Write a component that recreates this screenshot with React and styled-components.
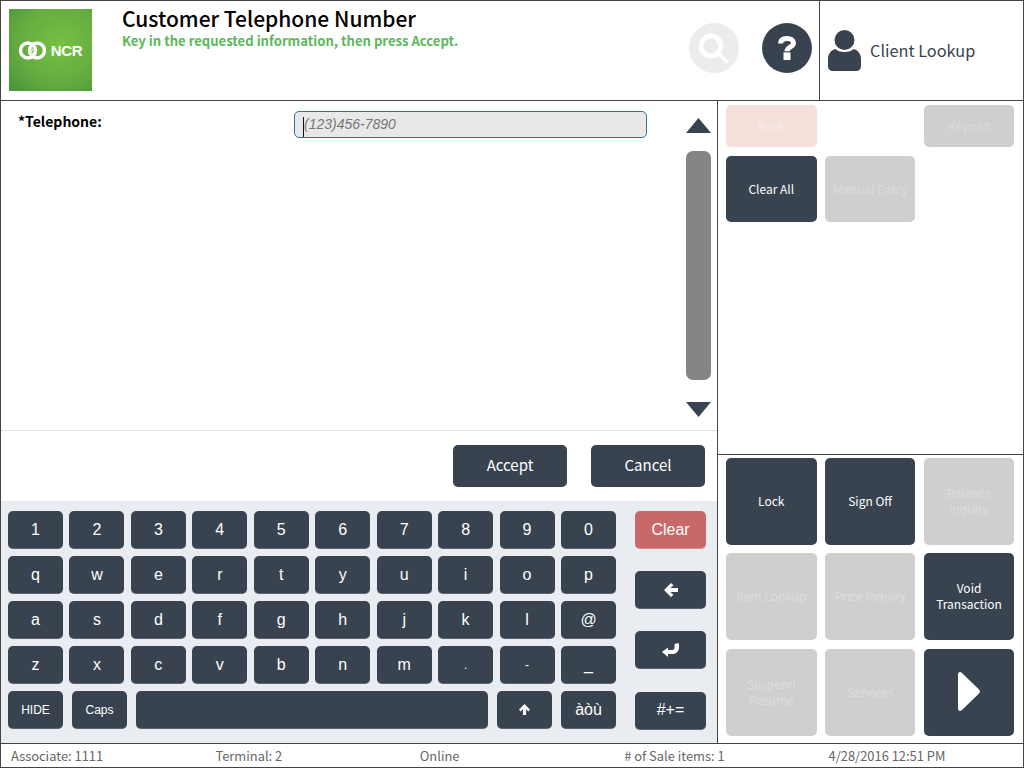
import React from 'react';
import styled, { createGlobalStyle } from 'styled-components';

const DARK = '#38434f';
const SANS = '"Noto Sans CJK JP", "Lato", sans-serif';
const ARIAL = '"Liberation Sans", Arial, sans-serif';

const KEY_ROWS = [
  ['1', '2', '3', '4', '5', '6', '7', '8', '9', '0'],
  ['q', 'w', 'e', 'r', 't', 'y', 'u', 'i', 'o', 'p'],
  ['a', 's', 'd', 'f', 'g', 'h', 'j', 'k', 'l', '@'],
  ['z', 'x', 'c', 'v', 'b', 'n', 'm', '.', '-', '_'],
];

const STATUS = ['Associate: 1111', 'Terminal: 2', 'Online', '# of Sale items: 1', '4/28/2016 12:51 PM'];

const GlobalStyle = createGlobalStyle`
  html, body {
    margin: 0;
    padding: 0;
    background: #fff;
  }
  * {
    box-sizing: border-box;
  }
`;

const ArrowGlyph = ({ size, turn }) => (
  <svg width={size} height={size} viewBox="0 0 14 14" style={{ transform: `rotate(${turn}deg)` }}>
    <path d="M0 7L7 0l2.500 2.300L6.300 5H14v4H6.300l3.200 2.700L7 14z" fill="#fff" />
  </svg>
);

const App = () => (
  <>
    <GlobalStyle />
    <Screen>
      <Header>
        <Logo>
          <svg width="27" height="19" viewBox="0 0 27 19">
            <g fill="none" stroke="#fff" strokeWidth="3.400">
              <circle cx="9" cy="9.500" r="7.500" />
              <circle cx="18" cy="9.500" r="7.500" />
            </g>
            <path d="M10 13l6-7M12 14.500l5-6M10 9.500l4-5" stroke="#e4f0dc" strokeWidth="1.200" />
          </svg>
          <LogoName>NCR</LogoName>
        </Logo>
        <Heading>
          <Title>Customer Telephone Number</Title>
          <Hint>Key in the requested information, then press Accept.</Hint>
        </Heading>
        <RoundIcon $disabled>
          <svg width="32" height="32" viewBox="0 0 32 32">
            <circle cx="13" cy="14" r="10" fill="none" stroke="#fff" strokeWidth="5" />
            <path d="M21 22l7.500 7.500" stroke="#fff" strokeWidth="3.600" strokeLinecap="round" />
          </svg>
        </RoundIcon>
        <RoundIcon>
          <svg width="18" height="24" viewBox="0 0 18 24">
            <path d="M2.500 7.500C2.500 4.200 5 2.500 9 2.500s6.500 1.800 6.500 4.700c0 3.800-6.500 3.600-6.500 8" fill="none" stroke="#fff" strokeWidth="5" />
            <rect x="5.500" y="16.400" width="7" height="7.600" fill="#fff" />
          </svg>
        </RoundIcon>
        <ClientLookup>
          <svg width="33" height="41" viewBox="0 0 33 41">
            <circle cx="16.500" cy="10" r="10" fill={DARK} />
            <path d="M7.500 19c3 4 15 4 18 0 4.500 1 7.500 5 7.500 10v7c0 3-2 5-5 5H5c-3 0-5-2-5-5v-7c0-5 3-9 7.500-10z" fill={DARK} />
          </svg>
          <ClientName>Client Lookup</ClientName>
        </ClientLookup>
      </Header>

      <Body>
        <LeftPanel>
          <FormArea>
            <FieldRow>
              <FieldLabel>*Telephone:</FieldLabel>
              <FieldInput>
                <Caret />
                (123)456-7890
              </FieldInput>
            </FieldRow>
            <ScrollColumn>
              <ScrollArrow />
              <ScrollThumb />
              <ScrollArrow $down />
            </ScrollColumn>
          </FormArea>

          <Actions>
            <ActionButton>Accept</ActionButton>
            <ActionButton>Cancel</ActionButton>
          </Actions>

          <Keyboard>
            <Keys>
              {KEY_ROWS.map((row) => (
                <KeyRow key={row[0]}>
                  {row.map((k) => (
                    <Key key={k} $small={k === '.' || k === '-'}>
                      {k}
                    </Key>
                  ))}
                </KeyRow>
              ))}
              <BottomRow>
                <Key $small>HIDE</Key>
                <Key $small>Caps</Key>
                <Key />
                <Key $small>
                  <ArrowGlyph size={11} turn={90} />
                </Key>
                <Key>àòù</Key>
              </BottomRow>
            </Keys>
            <SideKeys>
              <SideKey $red>Clear</SideKey>
              <SideKey>
                <ArrowGlyph size={14} turn={0} />
              </SideKey>
              <SideKey>
                <svg width="17" height="14" viewBox="0 0 17 14">
                  <path d="M0 9l6-4.500V7h4c1.500 0 2.500-.8 2.500-2.500V1L16.500 0c.7 2 .7 4 .3 6-.6 2.800-3 5-6 5H6v3z" fill="#fff" />
                </svg>
              </SideKey>
              <SideKey>#+=</SideKey>
            </SideKeys>
          </Keyboard>
        </LeftPanel>

        <RightPanel>
          <TopActions>
            <ShortButton $tone="pink">Back</ShortButton>
            <span />
            <ShortButton $tone="off">Keypad</ShortButton>
            <TallButton>Clear All</TallButton>
            <TallButton $tone="off">Manual Entry</TallButton>
          </TopActions>
          <BottomActions>
            <GridButton>Lock</GridButton>
            <GridButton>Sign Off</GridButton>
            <GridButton $tone="off">Balance<br />Inquiry</GridButton>
            <GridButton $tone="off">Item Lookup</GridButton>
            <GridButton $tone="off">Price Inquiry</GridButton>
            <GridButton>Void<br />Transaction</GridButton>
            <GridButton $tone="off">Suspend<br />Resume</GridButton>
            <GridButton $tone="off">Services</GridButton>
            <GridButton>
              <svg width="22" height="39" viewBox="0 0 22 39">
                <path d="M2 0C.8 0 0 1 0 2.500v34C0 38 .8 39 2 39c.6 0 1.200-.3 1.700-.8L21 21.500c1.200-1.200 1.200-2.800 0-4L3.700 .8C3.200 .3 2.600 0 2 0z" fill="#fff" />
              </svg>
            </GridButton>
          </BottomActions>
        </RightPanel>
      </Body>

      <Footer>
        {STATUS.map((s) => (
          <FooterItem key={s}>{s}</FooterItem>
        ))}
      </Footer>
    </Screen>
  </>
);

export default App;

const Screen = styled.div`
  width: 1024px;
  height: 768px;
  display: flex;
  flex-direction: column;
  border: 1px solid #444;
  font-family: ${SANS};
  background: #fff;
  overflow: hidden;
`;

const Header = styled.div`
  height: 100px;
  flex: none;
  display: flex;
  align-items: flex-start;
  border-bottom: 1px solid #444;
`;

const Logo = styled.div`
  width: 83px;
  height: 82px;
  margin: 8px 0 0 8px;
  flex: none;
  display: flex;
  align-items: center;
  justify-content: center;
  gap: 5px;
  background: radial-gradient(ellipse at 62% 42%, #76c043 0%, #66ad40 55%, #48933b 100%);
`;

const LogoName = styled.span`
  font-family: ${ARIAL};
  font-size: 15px;
  font-weight: 700;
  letter-spacing: -0.3px;
  color: #fff;
`;

const Heading = styled.div`
  flex: 1;
  padding: 4px 0 0 30px;
`;

const Title = styled.div`
  font-size: 21px;
  line-height: 27px;
  font-weight: 500;
  color: #000;
`;

const Hint = styled.div`
  font-size: 13.100px;
  line-height: 18px;
  font-weight: 700;
  color: #5cb85c;
`;

const RoundIcon = styled.div`
  width: 50px;
  height: 50px;
  margin-top: 22px;
  margin-right: 23px;
  flex: none;
  border-radius: 50%;
  display: flex;
  align-items: center;
  justify-content: center;
  background: ${(p) => (p.$disabled ? '#ececec' : DARK)};
`;

const ClientLookup = styled.div`
  width: 204px;
  height: 99px;
  margin-left: -16px;
  flex: none;
  display: flex;
  align-items: center;
  gap: 9px;
  padding: 0 0 0 8px;
  border-left: 1px solid #444;
  font-size: 16.300px;
  color: ${DARK};
`;

const ClientName = styled.span`
  margin-bottom: 2px;
`;

const Body = styled.div`
  flex: 1;
  min-height: 0;
  display: flex;
`;

const LeftPanel = styled.div`
  width: 717px;
  flex: none;
  display: flex;
  flex-direction: column;
  border-right: 1px solid #444;
`;

const FormArea = styled.div`
  height: 330px;
  flex: none;
  display: flex;
  justify-content: space-between;
  border-bottom: 1px dotted #c8c8c8;
`;

const FieldRow = styled.div`
  width: 646px;
  display: flex;
  justify-content: space-between;
  align-items: flex-start;
  padding: 10px 0 0 17px;
`;

const FieldLabel = styled.div`
  font-size: 14px;
  line-height: 20px;
  font-weight: 700;
  color: #000;
`;

const FieldInput = styled.div`
  width: 353px;
  height: 27px;
  display: flex;
  align-items: center;
  padding: 0 0 1px 8px;
  border: 1px solid #2a72b8;
  border-radius: 5px;
  background: #e8e8e8;
  font-family: ${ARIAL};
  font-size: 14px;
  font-style: italic;
  color: #777;
`;

const Caret = styled.span`
  width: 1px;
  height: 20px;
  align-self: flex-end;
  margin-bottom: -1px;
  background: #111;
`;

const ScrollColumn = styled.div`
  width: 25px;
  margin-right: 6px;
  display: flex;
  flex-direction: column;
  padding-top: 17px;
`;

const ScrollArrow = styled.div`
  width: 25px;
  height: 15px;
  flex: none;
  background: ${DARK};
  clip-path: ${(p) => (p.$down ? 'polygon(0 0, 100% 0, 50% 100%)' : 'polygon(50% 0, 100% 100%, 0 100%)')};
`;

const ScrollThumb = styled.div`
  width: 25px;
  height: 229px;
  margin: 18px 0 22px;
  flex: none;
  border-radius: 7px;
  background: #858585;
`;

const Actions = styled.div`
  height: 70px;
  flex: none;
  display: flex;
  justify-content: flex-end;
  align-items: flex-start;
  gap: 24px;
  padding: 14px 12px 0 0;
`;

const ActionButton = styled.div`
  width: 114px;
  height: 42px;
  display: flex;
  align-items: center;
  justify-content: center;
  padding-bottom: 4px;
  border-radius: 5px;
  background: ${DARK};
  color: #fff;
  font-size: 15px;
`;

const Keyboard = styled.div`
  flex: 1;
  display: flex;
  padding: 10px 11px 0 7px;
  background: #e9ecf1;
`;

const Keys = styled.div`
  width: 608px;
  flex: none;
  display: flex;
  flex-direction: column;
  gap: 7px;
`;

const KeyRow = styled.div`
  display: grid;
  grid-template-columns: repeat(10, 1fr);
  column-gap: 6.5px;
`;

const BottomRow = styled.div`
  display: grid;
  grid-template-columns: 55px 55px 352px 55px 55px;
  column-gap: 9px;
`;

const Key = styled.div`
  height: 38px;
  display: flex;
  align-items: center;
  justify-content: center;
  border-radius: 5px;
  border-bottom: 1px solid #59636e;
  background: ${DARK};
  color: #fff;
  font-family: ${ARIAL};
  font-size: ${(p) => (p.$small ? '12px' : '16px')};
`;

const SideKeys = styled.div`
  flex: 1;
  display: flex;
  flex-direction: column;
  gap: 22.2px;
  padding-left: 19px;
`;

const SideKey = styled(Key)`
  width: 71px;
  background: ${(p) => (p.$red ? '#c96868' : DARK)};
  border-bottom-color: ${(p) => (p.$red ? '#d98a8a' : '#59636e')};
`;

const RightPanel = styled.div`
  flex: 1;
  display: flex;
  flex-direction: column;
`;

const TopActions = styled.div`
  height: 354px;
  flex: none;
  display: grid;
  grid-template-columns: repeat(3, 90.5px);
  grid-auto-rows: min-content;
  gap: 9px 8.4px;
  padding: 4px 0 0 8px;
  border-bottom: 1px solid #444;
`;

const tones = {
  on: `background: ${DARK}; color: #fff;`,
  off: 'background: #cfcfcf; color: #dcdcdc;',
  pink: 'background: #f5dfda; color: #f8ebe8;',
};

const ShortButton = styled.div`
  height: 42px;
  display: flex;
  align-items: center;
  justify-content: center;
  text-align: center;
  border-radius: 5px;
  font-size: 12px;
  line-height: 16px;
  ${(p) => tones[p.$tone || 'on']}
`;

const TallButton = styled(ShortButton)`
  height: 66px;
`;

const BottomActions = styled.div`
  flex: 1;
  display: grid;
  grid-template-columns: repeat(3, 90.5px);
  grid-auto-rows: 87px;
  gap: 8.4px;
  padding: 3px 0 0 8px;
`;

const GridButton = styled(ShortButton)`
  height: auto;
  padding-bottom: 1px;
`;

const Footer = styled.div`
  height: 24px;
  flex: none;
  display: grid;
  grid-template-columns: repeat(5, 1fr);
  align-items: center;
  padding-bottom: 1px;
  border-top: 1px solid #444;
`;

const FooterItem = styled.div`
  padding-left: 10px;
  font-size: 12.900px;
  color: #666;
`;
